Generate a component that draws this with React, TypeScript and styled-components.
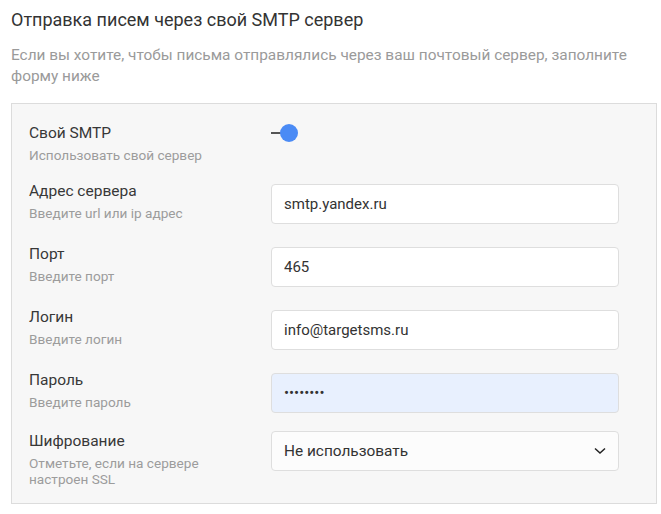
import React from "react";
import styled, { createGlobalStyle } from "styled-components";

const Global = createGlobalStyle`
  html, body { margin: 0; padding: 0; background: #fff; }
  body { font-family: Roboto, "Noto Sans", sans-serif; color: #333; }
  * { box-sizing: border-box; }
`;

const Page = styled.div`
  padding: 8px 4px 0 11px;
  width: 661px;
`;

const Title = styled.h2`
  margin: 0;
  font-size: 18px;
  line-height: 24px;
  font-weight: 400;
  color: #333;
`;

const Lead = styled.p`
  margin: 13px 0 0;
  font-size: 15.4px;
  line-height: 21px;
  color: #9a9a9a;
  width: 640px;
`;

const Panel = styled.div`
  margin-top: 16px;
  width: 646px;
  border: 1px solid #dcdcdc;
  background: #f7f7f7;
  padding: 19px 36px 16px 17px;
`;

const Row = styled.div<{ $gap: number }>`
  display: grid;
  grid-template-columns: 242px 348px;
  margin-bottom: ${(p) => p.$gap}px;
  &:last-child { margin-bottom: 0; }
`;

const LabelBlock = styled.div<{ $offset: number }>`
  display: flex;
  flex-direction: column;
  margin-top: ${(p) => p.$offset}px;
  padding-right: 36px;
`;

const LabelTitle = styled.div`
  font-size: 15.5px;
  line-height: 21px;
  color: #383838;
`;

const LabelHint = styled.div`
  font-size: 13.6px;
  line-height: 16px;
  color: #9c9c9c;
  margin-top: 3px;
`;

const ToggleWrap = styled.div`
  display: flex;
  align-items: center;
  height: 20px;
`;

const ToggleTrack = styled.div`
  width: 10px;
  height: 2px;
  background: #555;
`;

const ToggleKnob = styled.div`
  width: 18px;
  height: 18px;
  border-radius: 50%;
  background: #4b8bf5;
  margin-left: -1px;
`;

const Field = styled.input<{ $autofill?: boolean }>`
  width: 348px;
  height: 40px;
  border: 1px solid #dedede;
  border-radius: 4px;
  background: ${(p) => (p.$autofill ? "#e8f0fe" : "#fff")};
  padding: 0 12px;
  font-family: Roboto, "Noto Sans", sans-serif;
  font-size: 15px;
  color: #333;
  outline: none;
`;

const SelectBox = styled.div`
  width: 348px;
  height: 40px;
  border: 1px solid #dedede;
  border-radius: 4px;
  background: #fcfcfc;
  padding: 0 12px;
  display: flex;
  align-items: center;
  justify-content: space-between;
  font-size: 15.4px;
  color: #333;
`;

const Chevron = () => (
  <svg width="12" height="8" viewBox="0 0 12 8">
    <path d="M1 1.5 L6 6 L11 1.5" fill="none" stroke="#222" strokeWidth="1.5" />
  </svg>
);

export default function App() {
  return (
    <>
      <Global />
      <Page>
        <Title>Отправка писем через свой SMTP сервер</Title>
        <Lead>
          Если вы хотите, чтобы письма отправлялись через ваш почтовый сервер, заполните форму ниже
        </Lead>
        <Panel>
          <Row $gap={21}>
            <LabelBlock $offset={0}>
              <LabelTitle>Свой SMTP</LabelTitle>
              <LabelHint>Использовать свой сервер</LabelHint>
            </LabelBlock>
            <ToggleWrap>
              <ToggleTrack />
              <ToggleKnob />
            </ToggleWrap>
          </Row>
          <Row $gap={23}>
            <LabelBlock $offset={-3}>
              <LabelTitle>Адрес сервера</LabelTitle>
              <LabelHint>Введите url или ip адрес</LabelHint>
            </LabelBlock>
            <Field defaultValue="smtp.yandex.ru" />
          </Row>
          <Row $gap={23}>
            <LabelBlock $offset={-3}>
              <LabelTitle>Порт</LabelTitle>
              <LabelHint>Введите порт</LabelHint>
            </LabelBlock>
            <Field defaultValue="465" />
          </Row>
          <Row $gap={23}>
            <LabelBlock $offset={-3}>
              <LabelTitle>Логин</LabelTitle>
              <LabelHint>Введите логин</LabelHint>
            </LabelBlock>
            <Field defaultValue="info@targetsms.ru" />
          </Row>
          <Row $gap={18}>
            <LabelBlock $offset={-3}>
              <LabelTitle>Пароль</LabelTitle>
              <LabelHint>Введите пароль</LabelHint>
            </LabelBlock>
            <Field type="password" $autofill defaultValue="12345678" />
          </Row>
          <Row $gap={0}>
            <LabelBlock $offset={0}>
              <LabelTitle>Шифрование</LabelTitle>
              <LabelHint>Отметьте, если на сервере настроен SSL</LabelHint>
            </LabelBlock>
            <SelectBox>
              <span>Не использовать</span>
              <Chevron />
            </SelectBox>
          </Row>
        </Panel>
      </Page>
    </>
  );
}
